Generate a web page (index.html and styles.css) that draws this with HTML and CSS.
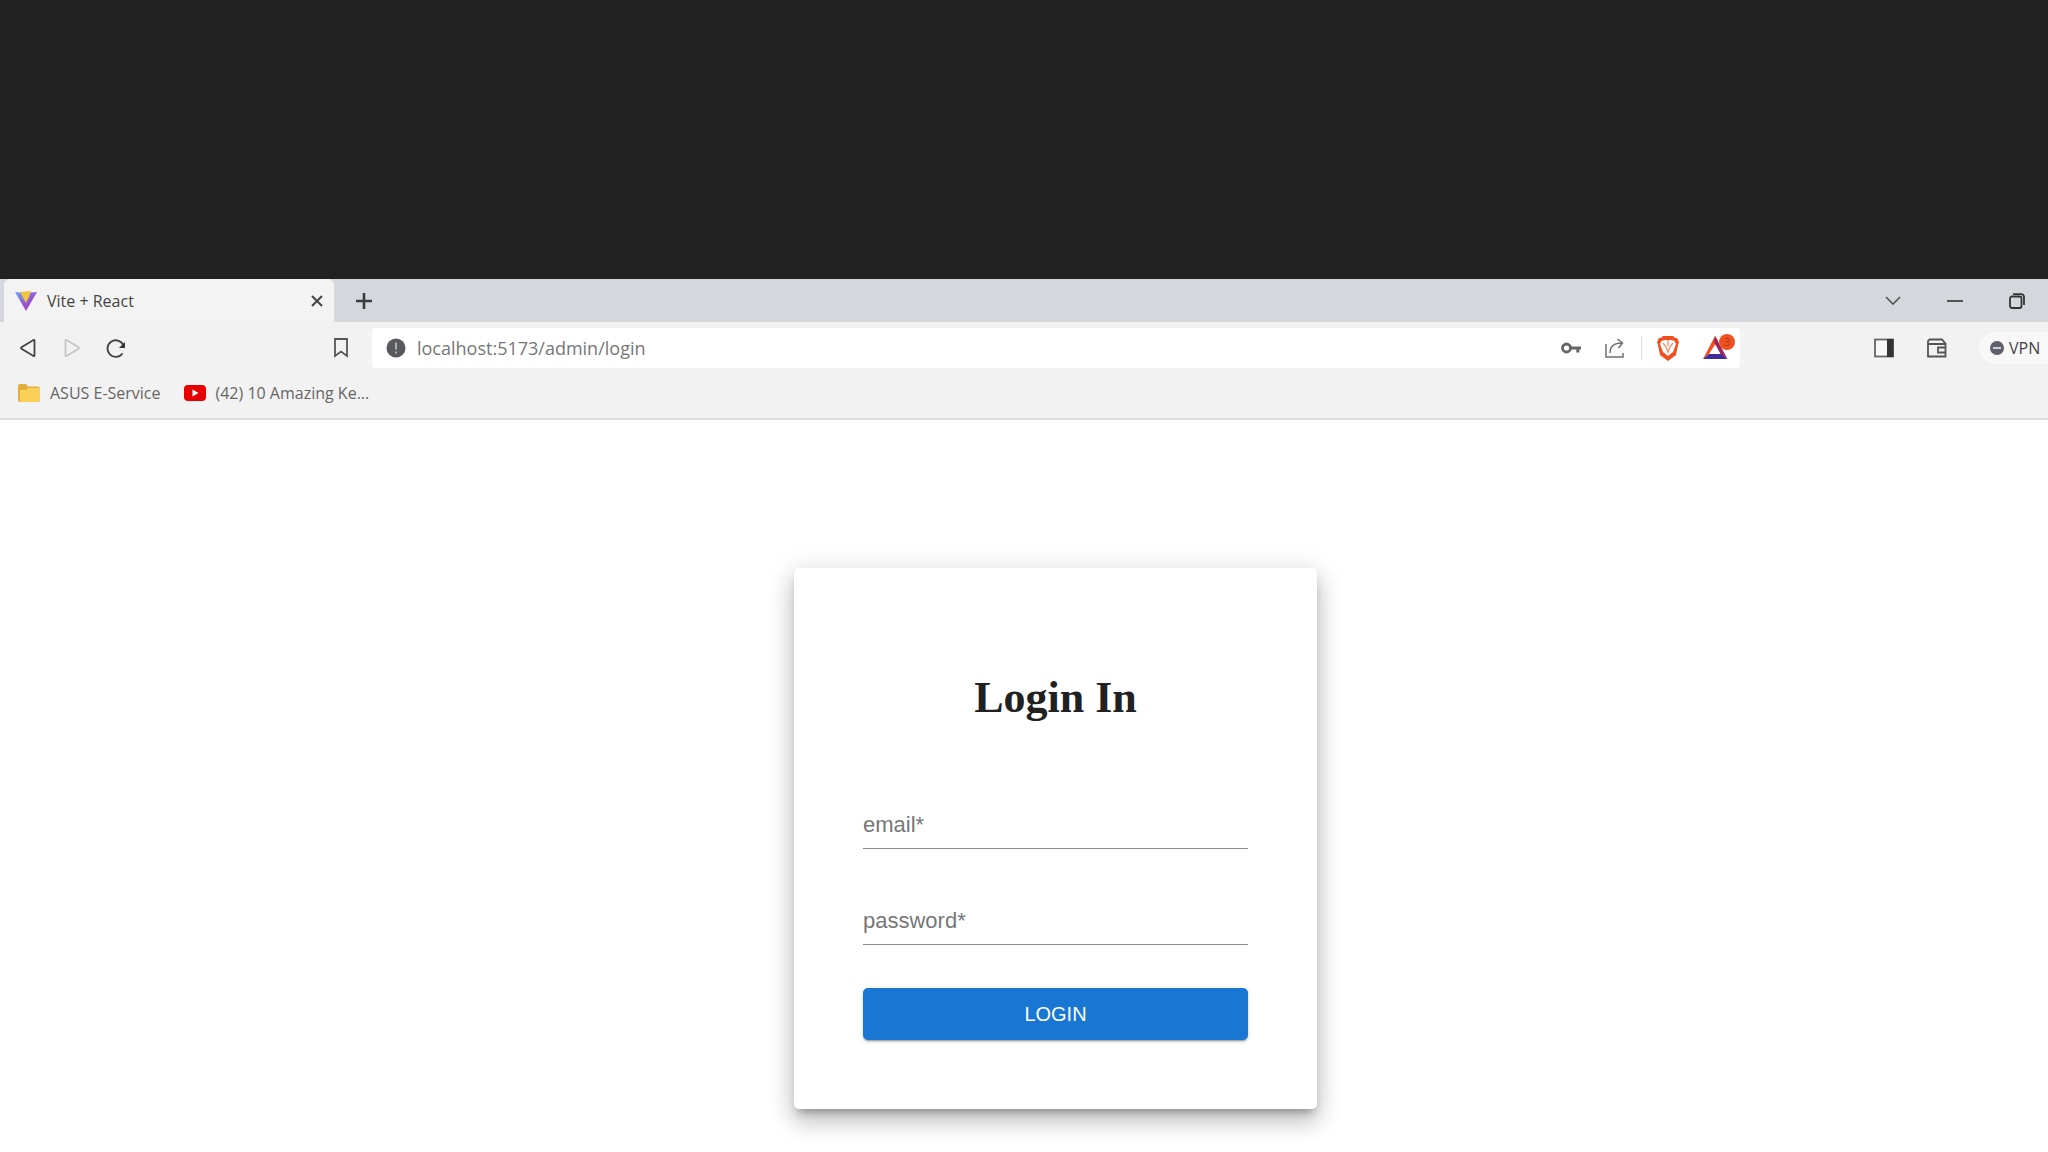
FILE: index.html
```html
<!DOCTYPE html>
<html lang="en">
<head>
<meta charset="UTF-8">
<meta name="viewport" content="width=device-width, initial-scale=1.0">
<title>Vite + React</title>
<link rel="stylesheet" href="styles.css">
</head>
<body>

<div class="top-space"></div>

<header class="browser">
  <!-- Tab strip -->
  <div class="tab-bar">
    <div class="tab">
      <svg width="22" height="22" viewBox="0 0 22 22">
        <defs>
          <linearGradient id="vite" x1="0" y1="0" x2="1" y2="1">
            <stop offset="0" stop-color="#6aa5f5"/>
            <stop offset="0.6" stop-color="#9a4fd0"/>
          </linearGradient>
        </defs>
        <path d="M0 2l11 1 11-1-11 19z" fill="url(#vite)"/>
        <path d="M5 2l11-1-2 6-3 6-4-7z" fill="#ecc63e"/>
      </svg>
      <span class="tab-title">Vite + React</span>
      <button class="close-btn" aria-label="Close tab">
        <svg width="12" height="12" viewBox="0 0 12 12"><path d="M1 1l10 10M11 1L1 11" stroke="#444" stroke-width="2"/></svg>
      </button>
    </div>
    <button class="icon-btn new-tab" aria-label="New tab">
      <svg width="18" height="18" viewBox="0 0 18 18"><path d="M9 1v16M1 9h16" stroke="#3a3d40" stroke-width="2.6"/></svg>
    </button>
    <div class="window-btns">
      <button aria-label="Search tabs">
        <svg width="16" height="10" viewBox="0 0 16 10"><path d="M1 1l7 7 7-7" fill="none" stroke="#555" stroke-width="1.6"/></svg>
      </button>
      <button aria-label="Minimize">
        <svg width="16" height="16" viewBox="0 0 16 16"><path d="M0 8h16" stroke="#444" stroke-width="1.8"/></svg>
      </button>
      <button aria-label="Restore">
        <svg width="16" height="16" viewBox="0 0 16 16" fill="none" stroke="#333" stroke-width="1.8"><rect x="1" y="3.5" width="11.5" height="11.5" rx="2"/><path d="M4 1.2h8a3 3 0 0 1 3 3V12"/></svg>
      </button>
    </div>
  </div>

  <!-- Toolbar -->
  <div class="toolbar">
    <button class="icon-btn" aria-label="Back">
      <svg width="16" height="20" viewBox="0 0 16 20"><path d="M14.5 2.5v15q0 1-1 .5L1.5 10.8q-1-.8 0-1.6L13.5 2q1-.5 1 .5z" fill="none" stroke="#444" stroke-width="1.8"/></svg>
    </button>
    <button class="icon-btn" aria-label="Forward" disabled>
      <svg width="16" height="20" viewBox="0 0 16 20"><path d="M1.5 2.5v15q0 1 1 .5l12-7.2q1-.8 0-1.6L2.5 2q-1-.5-1 .5z" fill="none" stroke="#c6c6c6" stroke-width="1.8"/></svg>
    </button>
    <button class="icon-btn" aria-label="Reload">
      <svg width="20" height="20" viewBox="0 0 20 20"><path d="M16.5 15.5A8.3 8.3 0 1 1 17.3 7" fill="none" stroke="#444" stroke-width="1.9"/><path d="M19 4v6h-6z" fill="#333"/></svg>
    </button>
    <button class="icon-btn bookmark-btn" aria-label="Bookmark this page">
      <svg width="14" height="20" viewBox="0 0 14 20"><path d="M1 1h12v17l-6-4.5L1 18z" fill="none" stroke="#555" stroke-width="1.8"/></svg>
    </button>

    <div class="address">
      <svg width="20" height="20" viewBox="0 0 20 20"><circle cx="10" cy="10" r="9.5" fill="#57595c"/><path d="M10 4.5v7M10 13.5v2" stroke="#b5b5b5" stroke-width="1.8"/></svg>
      <input class="url" type="text" value="localhost:5173/admin/login" aria-label="Address">
      <button class="icon-btn" aria-label="Passwords">
        <svg width="20" height="12" viewBox="0 0 20 12"><circle cx="5.5" cy="6" r="4" fill="none" stroke="#666" stroke-width="2.8"/><path d="M10 6h10M16.8 6v4.5" stroke="#666" stroke-width="3"/></svg>
      </button>
      <button class="icon-btn" aria-label="Share">
        <svg width="20" height="20" viewBox="0 0 20 20" fill="none" stroke="#707070" stroke-width="1.5"><path d="M1 6v13h17v-4M5 15C5 8 9 5 17 5M12.5 1l5 4-4 5"/></svg>
      </button>
      <span class="divider"></span>
      <button class="icon-btn" aria-label="Brave Shields">
        <svg width="22" height="26" viewBox="0 0 22 26"><path d="M6 1h10l2 2 2 0 2 4-1 3-2 10-8 6-8-6L1 10 0 7l2-4 2 0z" fill="#f0501e"/><path d="M4.5 6l3.500-1h6l3.500 1 1.500 3-3 8-5 4-5-4-3-8z" fill="#fff"/><path d="M6 8l3 4 2 5 2-5 3-4M11 5v6" fill="none" stroke="#f2906a" stroke-width="1.4"/></svg>
      </button>
      <button class="icon-btn rewards-btn" aria-label="Brave Rewards">
        <svg width="25" height="23" viewBox="0 0 25 23"><path d="M12 0l3 4.500L6 18 0 23z" fill="#f0521f"/><path d="M12 0l12.500 23-7-5L11 6z" fill="#9a2363"/><path d="M0 23l6-5h12l6.500 5z" fill="#3f2c9c"/><path d="M12 9l5 9H6.500z" fill="#fff"/></svg>
        <span class="badge">3</span>
      </button>
    </div>

    <button class="icon-btn" aria-label="Sidebar">
      <svg width="20" height="20" viewBox="0 0 20 20"><rect x="1" y="1.5" width="18" height="17" fill="#f7f7f7" stroke="#666" stroke-width="1.8"/><path d="M13 1h6.500v18H13z" fill="#333"/></svg>
    </button>
    <button class="icon-btn wallet-btn" aria-label="Wallet">
      <svg width="20" height="20" viewBox="0 0 20 20" fill="none" stroke="#555" stroke-width="1.8"><path d="M18 6v-1L15 1.500H2.500L1 3v15.500h17.500V6H1M18.500 9.500H11v5h7.500"/></svg>
    </button>
    <button class="vpn-btn">
      <svg width="14" height="14" viewBox="0 0 14 14"><circle cx="7" cy="7" r="7" fill="#60606c"/><path d="M3 7h8" stroke="#cfcfd8" stroke-width="2"/></svg>
      VPN
    </button>
  </div>

  <!-- Bookmarks -->
  <nav class="bookmarks">
    <a href="#">
      <svg width="22" height="20" viewBox="0 0 22 20"><path d="M0 3q0-2 2-2h6l2 2.500h10q2 0 2 2V17q0 2-2 2H2q-2 0-2-2z" fill="#e3ae3d"/><path d="M2 7h6l2-2h12v12q0 2-2 2H4q-2 0-2-2z" fill="#fbd059"/></svg>
      ASUS E-Service
    </a>
    <a href="#">
      <svg width="22" height="16" viewBox="0 0 22 16"><rect width="22" height="16" rx="4" fill="#e60000"/><path d="M8.500 4.500l6 3.500-6 3.500z" fill="#fff"/></svg>
      (42) 10 Amazing Ke...
    </a>
  </nav>
</header>

<main class="page">
  <form class="card">
    <h1>Login In</h1>
    <div class="field">
      <input type="email" id="email">
      <label for="email">email*</label>
    </div>
    <div class="field">
      <input type="password" id="password">
      <label for="password">password*</label>
    </div>
    <button class="login-btn" type="button">LOGIN</button>
  </form>
</main>

</body>
</html>
```
FILE: styles.css
```css
* {
  box-sizing: border-box;
}
body {
  margin: 0;
  background-color: #fff;
  font-family: "Open Sans", "Noto Sans", sans-serif;
}
button {
  padding: 0;
  border: none;
  background: none;
  font-family: inherit;
  cursor: pointer;
}
svg {
  display: block;
  flex-shrink: 0;
}
.top-space {
  height: 279px;
  background-color: #212121;
}
.browser {
  background-color: #f2f2f2;
  border-bottom: 2px solid #dcdcdc;
}
.tab-bar {
  display: flex;
  height: 43px;
  padding-left: 4px;
  background-color: #d4d8dc;
}
.tab {
  display: flex;
  align-items: center;
  width: 330px;
  padding: 0 11px;
  background-color: #f3f3f3;
  border-radius: 6px 6px 0 0;
}
.tab-title {
  margin-left: 10px;
  font-size: 16px;
  color: #444;
}
.close-btn {
  margin-left: auto;
}
.icon-btn {
  position: relative;
  display: flex;
  align-items: center;
  justify-content: center;
  flex-shrink: 0;
  width: 44px;
  height: 40px;
}
.new-tab {
  height: 43px;
  margin-left: 8px;
}
.window-btns {
  display: flex;
  margin-left: auto;
}
.window-btns button {
  display: flex;
  align-items: center;
  justify-content: center;
  width: 62px;
}
.toolbar {
  display: flex;
  align-items: center;
  height: 51px;
  padding-left: 6px;
}
.bookmark-btn {
  margin-left: 181px;
}
.address {
  display: flex;
  flex: 1;
  align-items: center;
  height: 40px;
  margin: 0 122px 0 9px;
  padding-left: 14px;
  background-color: #fff;
  border-radius: 4px;
}
.url {
  flex: 1;
  min-width: 0;
  padding: 0;
  margin-left: 11px;
  border: none;
  outline: none;
  background: none;
  font-family: inherit;
  font-size: 18px;
  color: #777;
}
.divider {
  width: 1px;
  height: 24px;
  margin: 0 4px;
  background-color: #ddd;
}
.rewards-btn {
  width: 50px;
}
.badge {
  position: absolute;
  top: 6px;
  right: 5px;
  width: 16px;
  height: 16px;
  border-radius: 50%;
  background-color: #f0521f;
  color: #b5391a;
  font-size: 11px;
  line-height: 16px;
}
.wallet-btn {
  margin: 0 20px 0 9px;
}
.vpn-btn {
  display: flex;
  align-items: center;
  gap: 5px;
  width: 69px;
  height: 32px;
  padding-left: 11px;
  background-color: #f8f8f8;
  border-radius: 16px 0 0 16px;
  font-size: 16px;
  color: #444;
}
.bookmarks {
  display: flex;
  gap: 23px;
  height: 45px;
  padding-left: 18px;
}
.bookmarks a {
  display: flex;
  align-items: center;
  gap: 10px;
  height: 40px;
  font-size: 16px;
  color: #666;
  text-decoration: none;
}
.page {
  display: flex;
  justify-content: center;
  padding: 148px 0 42px 63px;
}
.card {
  width: 523px;
  padding: 69px;
  background-color: #fff;
  border-radius: 5px;
  box-shadow: 0 7px 8px -4px rgba(0, 0, 0, 0.3),
    0 14px 22px 1px rgba(0, 0, 0, 0.14),
    0 5px 26px 4px rgba(0, 0, 0, 0.12);
  font-family: "Liberation Sans", Arial, sans-serif;
}
.card h1 {
  margin: 36px 0 86px;
  font-family: "Liberation Serif", "Times New Roman", serif;
  font-size: 44px;
  line-height: 50px;
  text-align: center;
  color: #212121;
}
.field {
  position: relative;
  height: 40px;
  margin-bottom: 56px;
}
.field + .login-btn,
.field:nth-of-type(2) {
  margin-bottom: 0;
}
.field input {
  width: 100%;
  height: 40px;
  padding: 0;
  border: none;
  border-bottom: 1px solid #8c8c8c;
  outline: none;
  background: none;
  font-family: inherit;
  font-size: 22px;
}
.field label {
  position: absolute;
  top: 4px;
  left: 0;
  font-size: 22px;
  line-height: 24px;
  color: #777;
}
.login-btn {
  display: block;
  width: 100%;
  height: 52px;
  margin-top: 43px;
  border-radius: 5px;
  background-color: #1976d2;
  box-shadow: 0 3px 1px -2px rgba(0, 0, 0, 0.2),
    0 2px 2px 0 rgba(0, 0, 0, 0.14),
    0 1px 5px 0 rgba(0, 0, 0, 0.12);
  font-size: 20px;
  color: #fff;
}
```
